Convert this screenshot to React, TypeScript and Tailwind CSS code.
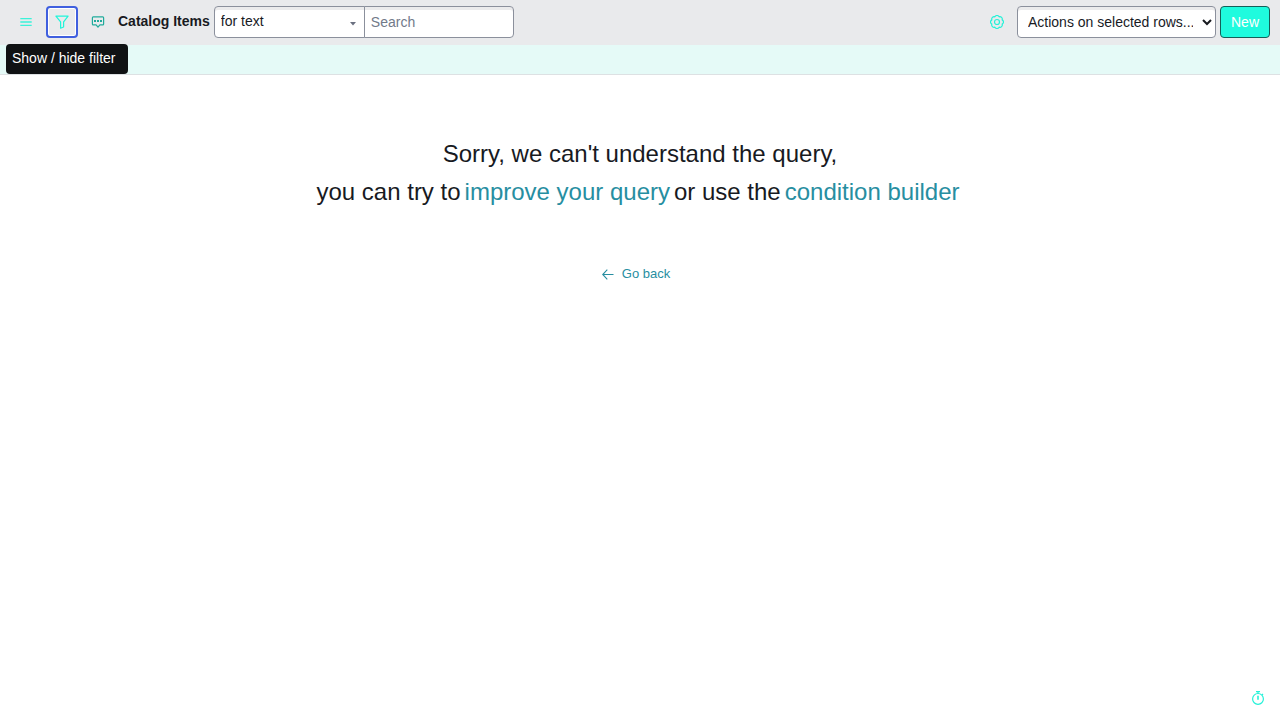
import type { ReactNode } from "react";

function IconButton({ label, className = "", children }: { label: string; className?: string; children: ReactNode }) {
  return (
    <button
      type="button"
      aria-label={label}
      className={`flex size-8 shrink-0 items-center justify-center rounded ${className}`}
    >
      {children}
    </button>
  );
}

function MenuIcon() {
  return (
    <svg width="12" height="10" viewBox="0 0 12 10" stroke="currentColor" strokeWidth="1.3">
      <path d="M0.3 1.7H11.7M0.3 5H11.7M0.3 8.3H11.7" />
    </svg>
  );
}

function FilterIcon() {
  return (
    <svg width="14" height="14" viewBox="0 0 14 14" fill="none" stroke="currentColor" strokeWidth="1.2" strokeLinejoin="round">
      <path d="M0.9 1.1H13.1L8.6 6.8V12L5.6 13.2V6.8Z" />
    </svg>
  );
}

function CommentIcon() {
  return (
    <svg width="14" height="12" viewBox="0 0 14 12" fill="none" stroke="currentColor" strokeWidth="1.2" strokeLinejoin="round">
      <path d="M2.2 0.8H11.8Q12.6 0.8 12.6 1.7V8Q12.6 8.9 11.8 8.9H8.9L7 11.2L5.1 8.9H2.2Q1.4 8.9 1.4 8V1.7Q1.4 0.8 2.2 0.8Z" />
      <path d="M3 4.9H5M6 4.9H8M9 4.9H11" strokeWidth="2" />
    </svg>
  );
}

function GearIcon() {
  return (
    <svg width="14" height="14" viewBox="0 0 14 14" fill="none" stroke="currentColor" strokeWidth="1.2" strokeLinejoin="round">
      <path d="M12.17 9.14A2.4 2.4 0 0 1 9.14 12.17A2.4 2.4 0 0 1 4.86 12.17A2.4 2.4 0 0 1 1.83 9.14A2.4 2.4 0 0 1 1.83 4.86A2.4 2.4 0 0 1 4.86 1.83A2.4 2.4 0 0 1 9.14 1.83A2.4 2.4 0 0 1 12.17 4.86A2.4 2.4 0 0 1 12.17 9.14Z" />
      <circle cx="7" cy="7" r="2.5" />
    </svg>
  );
}

function ArrowLeftIcon() {
  return (
    <svg width="12" height="11" viewBox="0 0 12 11" fill="none" stroke="currentColor" strokeWidth="1.1">
      <path d="M5.3 0.7L0.7 5.5L5.3 10.3M0.7 5.5H11.5" />
    </svg>
  );
}

function StopwatchIcon() {
  return (
    <svg width="14" height="14" viewBox="0 0 14 14" fill="none" stroke="currentColor" strokeWidth="1.2">
      <circle cx="7" cy="7.9" r="5.4" />
      <path d="M5 0.7H9M7 0.6V2.6M11 3L12 4" />
      <path d="M7 4.8V8.8" strokeWidth="1.6" />
    </svg>
  );
}

export default function App() {
  return (
    <div className="flex min-h-screen flex-col bg-white pr-2 font-['Liberation_Sans',Arial,sans-serif] text-sm text-[#181a1f]">
      <header className="flex items-center bg-[#e9eaec] px-2.5 py-1.5 pb-[7px]">
        <IconButton label="Menu" className="text-[#3bf2d9]">
          <MenuIcon />
        </IconButton>
        <div className="relative ml-1">
          <IconButton label="Show / hide filter" className="border-2 border-[#3f5fdf] text-[#1ff5da] ring-1 ring-inset ring-white">
            <FilterIcon />
          </IconButton>
          <div role="tooltip" className="absolute -left-10 top-[38px] z-10 h-[30px] w-[122px] whitespace-nowrap rounded bg-[#101214] px-1.5 py-1 text-white">
            Show / hide filter
          </div>
        </div>
        <IconButton label="Comments" className="ml-1 text-[#21ab9c]">
          <CommentIcon />
        </IconButton>
        <h1 className="ml-1 mr-1 whitespace-nowrap pb-0.5 font-bold">Catalog Items</h1>
        <div className="relative">
          <select
            aria-label="Search field"
            className="block h-8 w-[151px] appearance-none rounded-l border border-[#8b909c] bg-white pb-0.5 pl-1.5 pr-6 shadow-[inset_0_3px_0_#ebebec]"
          >
            <option>for text</option>
          </select>
          <svg className="pointer-events-none absolute right-[9px] top-4" width="6" height="4" viewBox="0 0 6 4">
            <path d="M0 0H6L3 3.6Z" fill="#6a7080" />
          </svg>
        </div>
        <input
          type="search"
          aria-label="Search"
          placeholder="Search"
          className="-ml-px h-8 w-[150px] rounded-r border border-[#8b909c] bg-white px-1.5 shadow-[inset_0_3px_0_#ebebec] placeholder:text-[#727a8a]"
        />
        <div className="ml-auto flex items-center gap-1">
          <IconButton label="Settings" className="text-[#24f1d8]">
            <GearIcon />
          </IconButton>
          <select
            aria-label="Actions on selected rows"
            className="h-8 w-[199px] rounded border border-[#8b909c] bg-white px-1.5 shadow-[inset_0_3px_0_#ebebec]"
          >
            <option>Actions on selected rows...</option>
          </select>
          <button type="button" className="h-8 rounded border border-[#155f59] bg-[#1ffbde] px-2.5 text-white">
            New
          </button>
        </div>
      </header>
      <div className="h-[30px] border-b border-[#dde1e3] bg-[#e5faf7]" />
      <main className="flex flex-col items-center pt-[60px]">
        <p className="text-center text-2xl leading-[38px]">
          Sorry, we can't understand the query,
        </p>
        <p className="flex flex-wrap justify-center gap-1 pr-1 text-2xl leading-[38px]">
          <span>you can try to</span>
          <a href="#query" className="text-[#278ea1]">improve your query</a>
          <span>or use the</span>
          <a href="#builder" className="text-[#278ea1]">condition builder</a>
        </p>
        <a href="#back" className="mt-[53px] flex items-center gap-2 pr-2 text-[13px] leading-5 text-[#278ea1]">
          <ArrowLeftIcon />
          Go back
        </a>
      </main>
      <footer className="mt-auto flex justify-end px-1.5 pb-1">
        <IconButton label="Response time" className="text-[#24f1d8]">
          <StopwatchIcon />
        </IconButton>
      </footer>
    </div>
  );
}
